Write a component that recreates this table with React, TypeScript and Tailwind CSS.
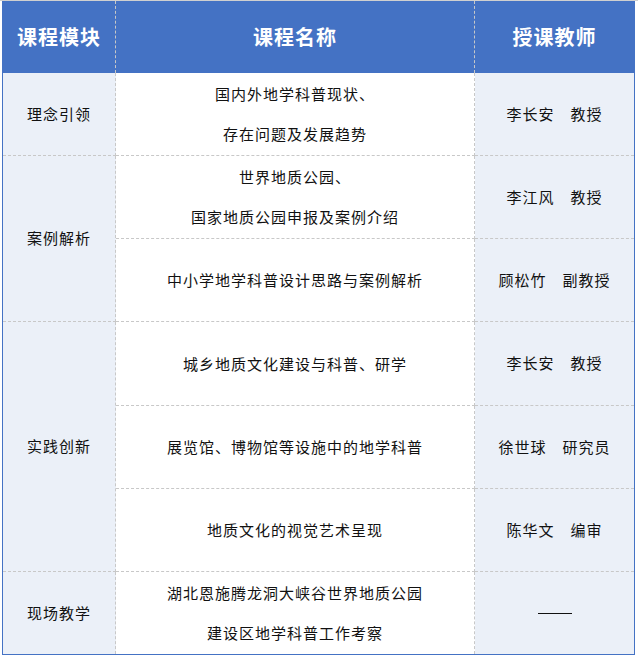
const rows = [
  { module: '理念引领', courses: [{ name: ['国内外地学科普现状、', '存在问题及发展趋势'], teacher: '李长安　教授' }] },
  {
    module: '案例解析',
    courses: [
      { name: ['世界地质公园、', '国家地质公园申报及案例介绍'], teacher: '李江风　教授' },
      { name: ['中小学地学科普设计思路与案例解析'], teacher: '顾松竹　副教授' },
    ],
  },
  {
    module: '实践创新',
    courses: [
      { name: ['城乡地质文化建设与科普、研学'], teacher: '李长安　教授' },
      { name: ['展览馆、博物馆等设施中的地学科普'], teacher: '徐世球　研究员' },
      { name: ['地质文化的视觉艺术呈现'], teacher: '陈华文　编审' },
    ],
  },
  { module: '现场教学', courses: [{ name: ['湖北恩施腾龙洞大峡谷世界地质公园', '建设区地学科普工作考察'], teacher: '——' }] },
]

const spanClass = ['', 'row-span-1', 'row-span-2', 'row-span-3']
const rowStart = ['', '', 'row-start-2', 'row-start-3', 'row-start-4', 'row-start-5', 'row-start-6', 'row-start-7', 'row-start-8']
const dashed = 'border-dashed border-[#c8c8c8]'
const TOTAL = 7

export default function App() {
  let idx = 0

  return (
    <div className="w-[638px] h-[658px] bg-white border-t border-[#d0d0d0] text-[#111] text-[15px] tracking-[1px] font-['Noto_Sans_CJK_SC','Noto_Sans',sans-serif]">
      <div className="ml-[2px] w-[633px] grid grid-cols-[113px_359px_159px] grid-rows-[72px_83px_83px_83px_84px_83px_83px_82px] border-x border-b border-[#4472c4]">
        {['课程模块', '课程名称', '授课教师'].map((h, i) => (
          <div
            key={h}
            className={`bg-[#4472c4] text-white text-[20px] font-bold flex items-center justify-center ${i < 2 ? `border-r ${dashed}` : ''}`}
          >
            {h}
          </div>
        ))}

        {rows.map((group) => {
          const start = idx + 2
          idx += group.courses.length
          const lastGroup = idx === TOTAL
          return [
            <div
              key={group.module}
              className={`${spanClass[group.courses.length]} ${rowStart[start]} col-start-1 bg-[#ebf0f8] flex items-center justify-center border-r ${dashed} ${lastGroup ? '' : 'border-b'}`}
            >
              {group.module}
            </div>,
            ...group.courses.flatMap((c, j) => {
              const last = start + j === TOTAL + 1
              return [
                <div
                  key={c.name[0]}
                  className={`${rowStart[start + j]} col-start-2 bg-white flex flex-col items-center justify-center leading-[40px] border-r ${dashed} ${last ? '' : 'border-b'}`}
                >
                  {c.name.map((line) => (
                    <span key={line}>{line}</span>
                  ))}
                </div>,
                <div
                  key={c.name[0] + '-t'}
                  className={`${rowStart[start + j]} col-start-3 bg-[#ebf0f8] flex items-center justify-center ${dashed} ${last ? '' : 'border-b'}`}
                >
                  {c.teacher === '——' ? <span className="block w-[34px] h-px bg-[#111]" /> : c.teacher}
                </div>,
              ]
            }),
          ]
        })}
      </div>
    </div>
  )
}
